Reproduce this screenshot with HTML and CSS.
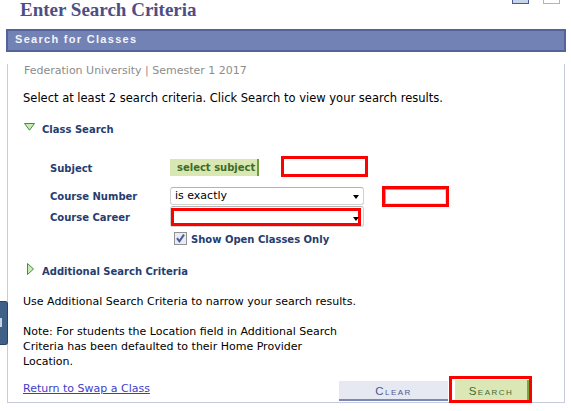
FILE: index.html
```html
<!doctype html>
<html lang="en">
<head>
<meta charset="UTF-8">
<meta name="viewport" content="width=device-width, initial-scale=1">
<title>Enter Search Criteria</title>
<link rel="stylesheet" href="styles.css">
</head>

<body>
<div class="pageTop">
<h1 class="pageTitle">Enter Search Criteria</h1>
<div class="winTools"><span class="winTool winToolOn"></span><span class="winTool"></span></div>
</div>
<div class="boxHead">Search for Classes</div>
<div class="box">
<p class="boxInst">Federation University | Semester 1 2017</p>
<p class="boxLead">Select at least 2 search criteria. Click Search to view your search results.</p>
<div class="groupHead">
<svg class="groupIconOpen" width="11" height="8" viewBox="0 0 11 8"><polygon points="0.5,0.5 10.5,0.5 5.5,7.2" fill="#c9ebb4" stroke="#3f8f3f"/></svg>
<span>Class Search</span>
</div>
<div class="crit">
<div class="critRow critRowSubject">
<label class="critLabel">Subject</label>
<button class="btnSubject" type="button">select subject</button>
<span class="mark markSubject"></span>
</div>
<div class="critRow critRowNumber">
<label class="critLabel">Course Number</label>
<div class="select selectNumber">is exactly<span class="selectArrow"></span></div>
<span class="mark markNumber"><span class="editBox"></span></span>
</div>
<div class="critRow critRowCareer">
<label class="critLabel">Course Career</label>
<div class="select selectCareer"><span class="mark markCareer"></span><span class="selectArrow"></span></div>
</div>
<div class="critRow critRowOpen">
<svg class="checkBox" width="13" height="13" viewBox="0 0 13 13"><rect x="0.5" y="0.5" width="12" height="12" fill="#e7ebf3" stroke="#929292"/><path d="M3 6.2 L5.4 9.3 L10 2.6" fill="none" stroke="#4b5b99" stroke-width="2"/></svg>
<span class="critLabel critLabelInline">Show Open Classes Only</span>
</div>
</div>
<div class="groupHead groupHeadClosed">
<svg class="groupIconClosed" width="7" height="12" viewBox="0 0 7 12"><polygon points="0.5,0.5 6.5,6 0.5,11.5" fill="#c9ebb4" stroke="#3f8f3f"/></svg>
<span>Additional Search Criteria</span>
</div>
<p class="boxText boxTextUse">Use Additional Search Criteria to narrow your search results.</p>
<p class="boxText boxTextNote">Note: For students the Location field in Additional Search<br>Criteria has been defaulted to their Home Provider<br>Location.</p>
<div class="boxFoot">
<a class="linkReturn" href="#">Return to Swap a Class</a>
<button class="btnClear" type="button">Clear</button>
<span class="markSearch"><button class="btnSearch" type="button">Search</button></span>
</div>
</div>
<div class="sideTab"></div>
</body>
</html>
```

FILE: styles.css
```css
body {
    background: #fff;
    color: #000;
    font-family: "DejaVu Sans", Verdana, sans-serif;
    font-size: 11px;
    height: 411px;
    margin: 0;
    overflow: hidden;
    position: relative;
}
button {
    border: 0;
    cursor: pointer;
    margin: 0;
    padding: 0;
}
p {
    margin: 0;
}
.pageTop {
    display: flex;
    height: 29px;
    justify-content: space-between;
}
.pageTitle {
    color: #4c4f86;
    font: bold 19px/20px "Liberation Serif", "Times New Roman", serif;
    margin: 0 0 0 20px;
}
.winTools {
    display: flex;
    gap: 14px;
    margin: -12px 11px 0 0;
}
.winTool {
    background: #fff;
    border: 1px solid #b4b4b4;
    box-sizing: border-box;
    height: 16px;
    width: 17px;
}
.winToolOn {
    background: #c6d3e8;
    border-color: #4c5a92;
}
.boxHead {
    background: #7382b4;
    border: 2px solid #56629a;
    box-sizing: border-box;
    color: #f2f4fa;
    font: bold 11px/17px "Liberation Sans", Arial, sans-serif;
    letter-spacing: 1.3px;
    margin-left: 6px;
    padding: 0 0 2px 7px;
    width: 560px;
}
.box {
    border: 1px solid #c6cbdd;
    border-top: 0;
    box-sizing: border-box;
    margin-left: 7px;
    padding: 0 32px 0 15px;
    width: 558px;
}
.boxInst {
    color: #8c8c8c;
    font-size: 11px;
    line-height: 14px;
    margin: 12px 0 0 1px;
}
.boxLead {
    font-size: 11.5px;
    line-height: 14px;
    margin-top: 13px;
}
.groupHead {
    align-items: flex-start;
    color: #263d6f;
    display: flex;
    font-size: 10px;
    font-weight: bold;
    line-height: 14px;
    margin-top: 18px;
}
.groupIconOpen {
    margin: 0 7px 0 1px;
}
.groupHeadClosed {
    margin-top: 18px;
}
.groupIconClosed {
    margin: -2px 8px 0 4px;
}
.crit {
    margin-top: 19px;
    padding-left: 27px;
}
.critRow {
    align-items: flex-start;
    display: flex;
}
.critLabel {
    color: #263d6f;
    font-size: 10px;
    font-weight: bold;
    line-height: 14px;
    width: 120px;
}
.critRowSubject {
    height: 22px;
}
.critRowSubject .critLabel {
    margin-top: 6px;
}
.critRowNumber {
    height: 20px;
    margin-top: 8px;
}
.critRowNumber .critLabel {
    margin-top: 4px;
}
.critRowCareer {
    height: 21px;
}
.critRowCareer .critLabel {
    margin-top: 5px;
}
.critRowOpen {
    margin-top: 5px;
}
.critLabelInline {
    margin: 1px 0 0 4px;
    width: auto;
}
.checkBox {
    margin-left: 124px;
}
.btnSubject {
    background: #d9e7b2;
    border-right: 2px solid #6f9d3d;
    color: #3d6b28;
    font: bold 10px/17px "DejaVu Sans", Verdana, sans-serif;
    height: 17px;
    margin-top: 3px;
    text-align: left;
    padding-left: 7px;
    width: 89px;
}
.mark {
    border: 3px solid #f00;
    box-sizing: border-box;
    display: block;
}
.markSubject {
    height: 21px;
    margin-left: 22px;
    width: 87px;
}
.markNumber {
    height: 21px;
    margin-left: 18px;
    width: 67px;
}
.editBox {
    border: 1px solid #e2e2e2;
    border-left-color: #a8a8a8;
    border-top-color: #a8a8a8;
    box-sizing: border-box;
    display: block;
    height: 15px;
    width: 61px;
}
.select {
    background: #fff;
    border: 1px solid #d0d0d0;
    border-radius: 3px;
    border-top-color: #b4b4b4;
    box-sizing: border-box;
    position: relative;
    width: 194px;
}
.selectNumber {
    height: 18px;
    line-height: 16px;
    margin-top: 1px;
    padding-left: 4px;
}
.selectCareer {
    height: 21px;
    padding-top: 1px;
}
.markCareer {
    height: 18px;
    width: 190px;
}
.selectArrow {
    border-left: 3.5px solid transparent;
    border-right: 3.5px solid transparent;
    border-top: 4px solid #000;
    bottom: 5px;
    height: 0;
    position: absolute;
    right: 4px;
    width: 0;
}
.boxText {
    line-height: 15px;
}
.boxTextUse {
    margin-top: 15px;
}
.boxTextNote {
    margin-top: 15px;
}
.boxFoot {
    align-items: flex-start;
    display: flex;
    height: 26px;
    margin-top: 7px;
}
.linkReturn {
    color: #3d3dc8;
    line-height: 15px;
    margin: 5px auto 0 0;
}
.btnClear,
.btnSearch {
    font: 11.5px/16px "Liberation Sans", Arial, sans-serif;
    font-variant: small-caps;
    letter-spacing: 1.5px;
    padding-top: 2px;
    text-align: center;
}
.btnClear {
    background: #e6e9f2;
    border-bottom: 2px solid #7d87b5;
    color: #4c5890;
    height: 20px;
    margin-top: 5px;
    width: 109px;
}
.markSearch {
    border: 3px solid #f00;
    box-sizing: border-box;
    display: block;
    height: 27px;
    margin-left: 1px;
    padding: 1px 0 0 3px;
    width: 83px;
}
.btnSearch {
    background: #dbe8b5;
    border-right: 2px solid #79a83c;
    color: #3e6a3a;
    display: block;
    height: 20px;
    line-height: 18px;
    width: 74px;
}
.sideTab {
    background: #3f6188;
    border: 1px solid #2a4363;
    border-left: 0;
    border-radius: 0 3px 3px 0;
    height: 42px;
    left: 0;
    position: absolute;
    top: 301px;
    width: 7px;
}
.sideTab:after {
    background: #c9d3e2;
    content: "";
    height: 9px;
    left: 0;
    position: absolute;
    top: 16px;
    width: 2px;
}
```
